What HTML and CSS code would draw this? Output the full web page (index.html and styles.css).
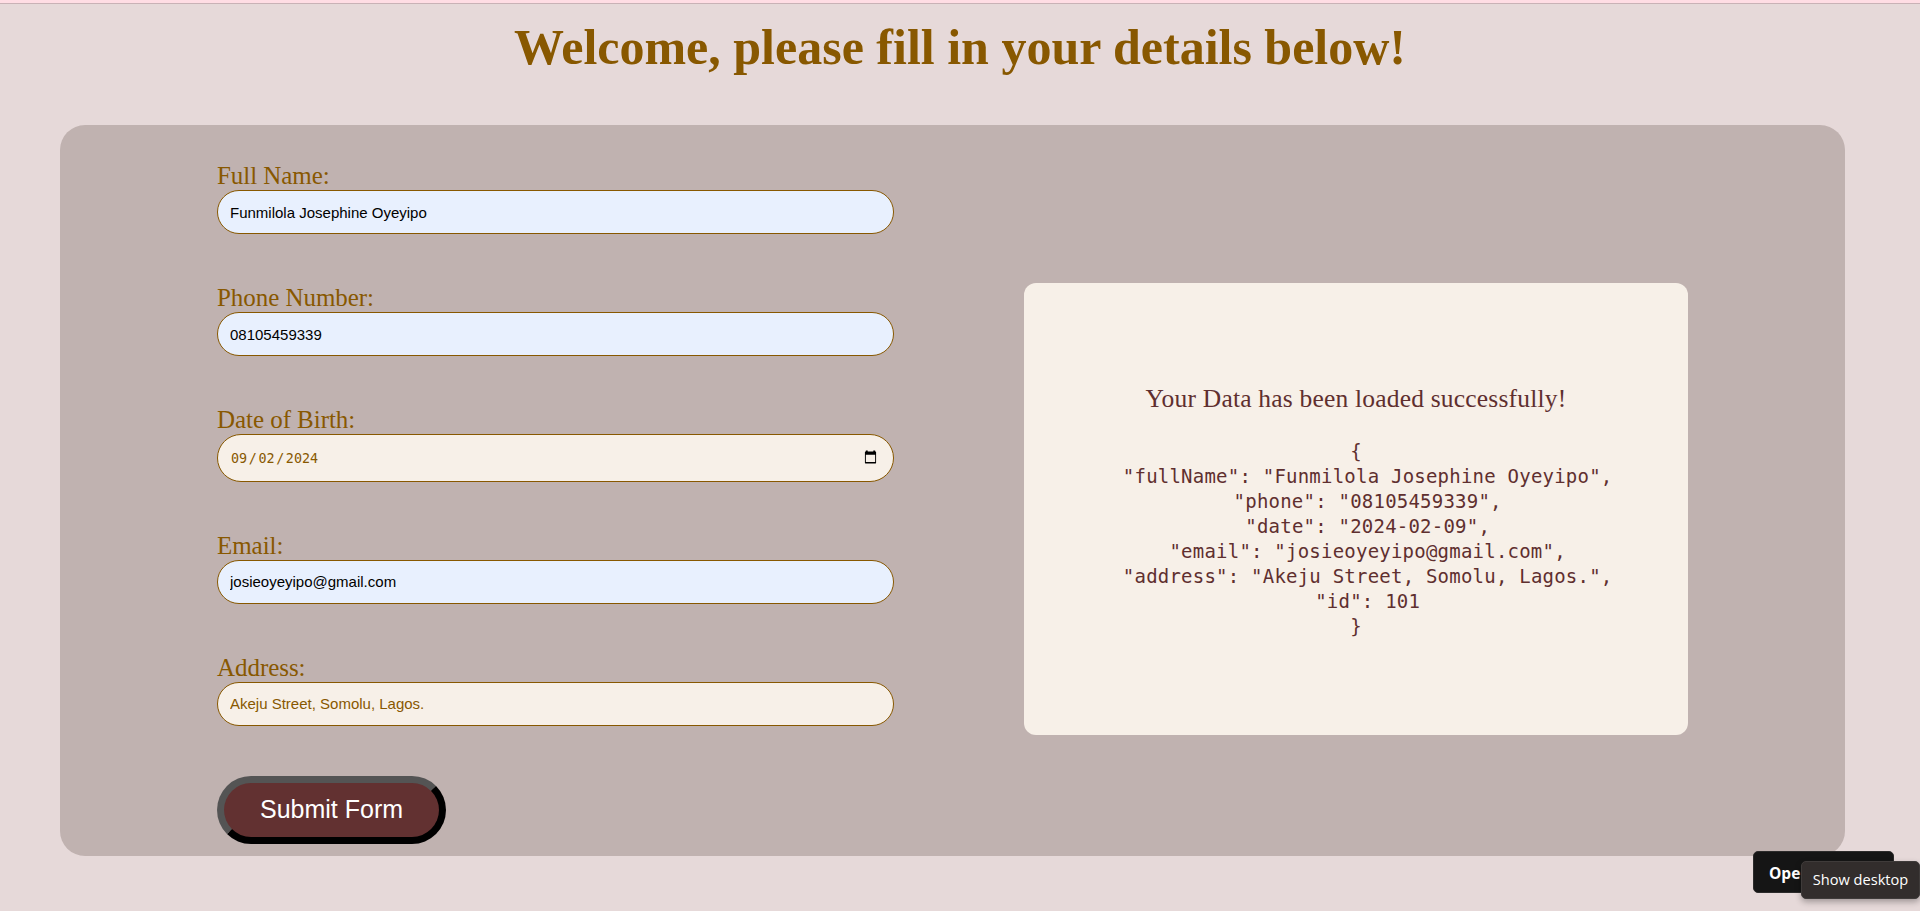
FILE: index.html
```html
<!DOCTYPE html>
<html lang="en">
<head>
<meta charset="utf-8">
<title>Details form</title>
<link rel="stylesheet" href="styles.css">
</head>
<body>
<div class="strip"></div>
<h1 class="title">Welcome, please fill in your details below!</h1>
<main class="panel">
  <form class="form">
    <div class="field"><label class="label" for="name">Full Name:</label><input class="input filled" id="name" type="text" value="Funmilola Josephine Oyeyipo"></div>
    <div class="field"><label class="label" for="phone">Phone Number:</label><input class="input filled" id="phone" type="text" value="08105459339"></div>
    <div class="field"><span class="label">Date of Birth:</span>
      <div class="input date"><span class="digits">09<span class="slash">/</span>02<span class="slash">/</span>2024</span>
        <svg class="calendar" viewBox="0 0 14 14"><path fill="#000" fill-rule="evenodd" d="M2 0h2v1h6V0h2v1h.5l.5.5v12l-.5.5h-11l-.5-.5v-12l.5-.5H2zM2 4.5v8h10v-8z"/></svg>
      </div></div>
    <div class="field"><label class="label" for="email">Email:</label><input class="input filled raised" id="email" type="text" value="josieoyeyipo@gmail.com"></div>
    <div class="field"><label class="label" for="address">Address:</label><input class="input raised" id="address" type="text" value="Akeju Street, Somolu, Lagos."></div>
    <button class="submit" type="button">Submit Form</button>
  </form>
  <section class="result">
    <p class="message">Your Data has been loaded successfully!</p>
<pre class="json">{
  "fullName": "Funmilola Josephine Oyeyipo",
  "phone": "08105459339",
  "date": "2024-02-09",
  "email": "josieoyeyipo@gmail.com",
  "address": "Akeju Street, Somolu, Lagos.",
  "id": 101
}</pre>
  </section>
</main>
<div class="open">Ope</div>
<div class="tooltip">Show desktop</div>
</body>
</html>
```
FILE: styles.css
```css
* { box-sizing: border-box; }
body {
  margin: 0;
  height: 911px;
  overflow: hidden;
  background: #e6d9d9;
  font-family: "Liberation Serif", serif;
  color: #885800;
}
.strip { height: 4px; background: #ffdde4; border-bottom: 1px solid #c9b2b6; }
.title {
  margin: 15px 0 0;
  height: 106px;
  font-size: 50px;
  line-height: 57px;
  font-variant-ligatures: none;
  text-align: center;
}
.panel {
  display: flex;
  align-items: flex-start;
  gap: 130px;
  width: 1785px;
  height: 731px;
  margin-left: 60px;
  padding: 37px 157px 0;
  border-radius: 25px;
  background: #c0b2b0;
}
.form { width: 677px; }
.field { display: flex; flex-direction: column; margin-bottom: 50px; }
.label { height: 28px; line-height: 28px; font-size: 25px; letter-spacing: -0.05px; }
.input {
  width: 100%;
  height: 44px;
  padding: 0 12px;
  border: 1px solid #885800;
  border-radius: 25px;
  background: #f7f0e8;
  color: #885800;
  font: 15px "Liberation Sans", sans-serif;
}
.filled { background: #e8f0fe; color: #000; }
.raised { padding-bottom: 2px; }
.date {
  display: flex;
  align-items: center;
  justify-content: space-between;
  height: 48px;
  padding: 0 16px 0 13px;
  font: 13.4px "DejaVu Sans Mono", monospace;
}
.slash { display: inline-block; width: 11.3px; text-align: center; }
.calendar { width: 13px; height: 14px; margin-bottom: 2px; }
.submit {
  display: block;
  width: 229px;
  height: 68px;
  padding: 0 0 2px;
  border: 7px outset #000;
  border-radius: 34px;
  background: #623131;
  color: #fff;
  font: 25px "Liberation Sans", sans-serif;
}
.result {
  width: 664px;
  height: 452px;
  margin-top: 121px;
  padding-top: 100px;
  border-radius: 12px;
  background: #f7f0e8;
  color: #5f2f2f;
  text-align: center;
}
.message { margin: 0; height: 56px; font-size: 25.5px; line-height: 31px; letter-spacing: 0.2px; }
.json {
  margin: 0;
  font: 19px/25px "DejaVu Sans Mono", monospace;
  letter-spacing: 0.22px;
}
.open, .tooltip { position: absolute; border-radius: 5px; color: #fff; white-space: nowrap; }
.open {
  left: 1753px;
  top: 851px;
  width: 141px;
  height: 42px;
  padding-left: 15px;
  border: 1px solid #2c2b2b;
  background: #151515;
  font: 700 15.5px/42px "Open Sans", sans-serif;
}
.tooltip {
  left: 1801px;
  top: 861px;
  width: 119px;
  height: 38px;
  border: 1px solid #3f3b3a;
  background: #322d2c;
  box-shadow: 0 3px 6px rgba(0, 0, 0, .3);
  font: 14.6px/35px "Open Sans", sans-serif;
  text-align: center;
}
```
